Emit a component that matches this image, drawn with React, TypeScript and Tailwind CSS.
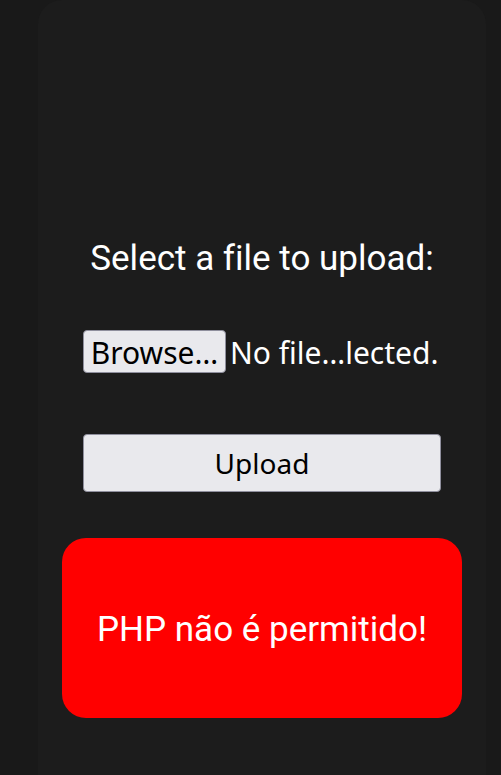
import { useRef } from "react";

export default function App() {
  const fileInput = useRef<HTMLInputElement>(null);

  return (
    <main className="min-h-screen bg-[#191919] pl-[38px] pr-[15px] text-white font-['Noto_Sans','Open_Sans',sans-serif] [font-variant-ligatures:none]">
      <form
        className="flex min-h-screen flex-col justify-end rounded-t-3xl bg-[#1c1c1c] px-6 pb-[57px]"
        onSubmit={(event) => event.preventDefault()}
      >
        <label htmlFor="file" className="text-center text-[35px] leading-10 whitespace-nowrap font-['Roboto',sans-serif]">
          Select a file to upload:
        </label>
        <div className="mt-[51px] flex items-center gap-1 px-[21px]">
          <input ref={fileInput} id="file" type="file" className="sr-only" />
          <button
            type="button"
            onClick={() => fileInput.current?.click()}
            className="h-[43px] w-[143px] shrink-0 rounded border border-[#8f8f9d] bg-[#e9e9ed] pt-0.5 text-[30px] leading-none whitespace-nowrap text-black"
          >
            Browse…
          </button>
          <span className="pt-0.5 text-[30px] leading-none whitespace-nowrap">No file…lected.</span>
        </div>
        <button type="submit" className="mx-[21px] mt-[61px] h-[58px] rounded border border-[#8f8f9d] bg-[#e9e9ed] text-[28px] leading-none text-black">
          Upload
        </button>
        <div role="alert" className="mt-[46px] flex h-[180px] items-center justify-center rounded-3xl bg-[#ff0000] pt-1 text-[35px] leading-10 whitespace-nowrap font-['Roboto',sans-serif]">
          PHP não é permitido!
        </div>
      </form>
    </main>
  );
}
